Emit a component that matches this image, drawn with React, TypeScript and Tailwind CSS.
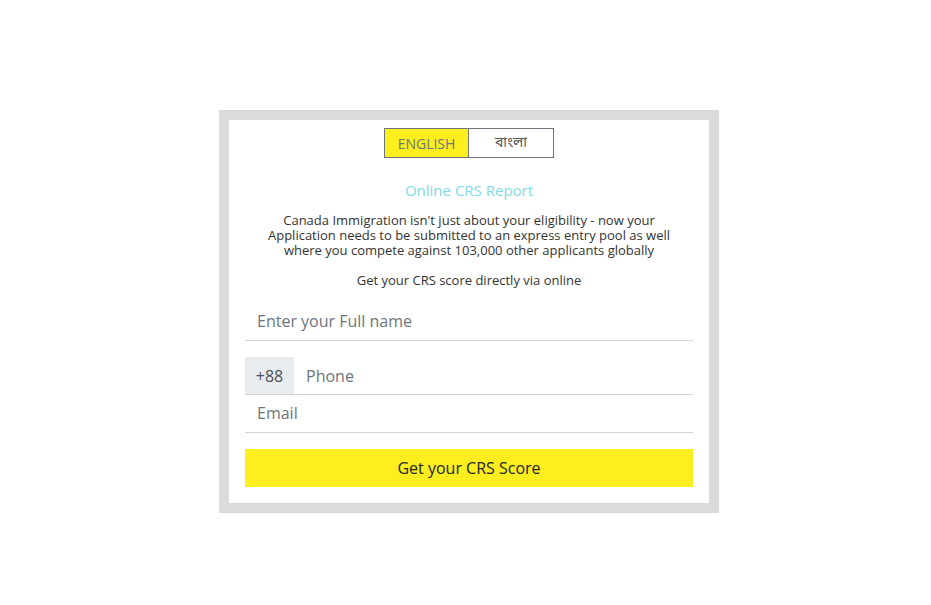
import React from "react";

export default function App() {
  return (
    <div className="w-[931px] h-[605px] bg-white flex" style={{ fontFamily: "'Open Sans', 'Noto Sans', sans-serif" }}>
      <div className="ml-[219px] mt-[110px] w-[500px] h-[403px] border-[10px] border-[#dbdbdb] bg-white px-4 pt-2 flex flex-col">
        <div className="flex justify-center">
          <div className="w-[85px] h-[30px] border border-[#6c757d] bg-[#fdee1e] text-[#6c757d] text-[14px] flex items-center justify-center">ENGLISH</div>
          <div className="w-[85px] h-[30px] border border-l-0 border-[#6c757d] bg-white text-[#555] text-[14px] flex items-center justify-center" style={{ fontFamily: "'Noto Sans Bengali', 'Noto Sans', sans-serif" }}>বাংলা</div>
        </div>
        <div className="mt-[22px] text-center text-[15px] leading-[20px] text-[#7ddbe8]">Online CRS Report</div>
        <div className="mt-[13px] text-center text-[13px] leading-[15px] text-[#333]">
          <p>Canada Immigration isn't just about your eligibility - now your</p>
          <p>Application needs to be submitted to an express entry pool as well</p>
          <p>where you compete against 103,000 other applicants globally</p>
          <p className="mt-[15px]">Get your CRS score directly via online</p>
        </div>
        <div className="mt-[14px] h-[39px] border-b border-[#ced4da] flex items-center px-3 text-[16px] text-[#6c757d]">Enter your Full name</div>
        <div className="mt-4 h-[38px] flex border-b border-[#ced4da]">
          <div className="w-[49px] bg-[#e9ecef] flex items-center justify-center text-[16px] text-[#495057]">+88</div>
          <div className="flex-1 flex items-center px-3 text-[16px] text-[#6c757d]">Phone</div>
        </div>
        <div className="h-[38px] border-b border-[#ced4da] flex items-center px-3 pb-[1px] text-[16px] text-[#6c757d]">Email</div>
        <div className="mt-4 h-[38px] bg-[#fdee1e] flex items-center justify-center text-[16px] text-[#212529]">Get your CRS Score</div>
      </div>
    </div>
  );
}
